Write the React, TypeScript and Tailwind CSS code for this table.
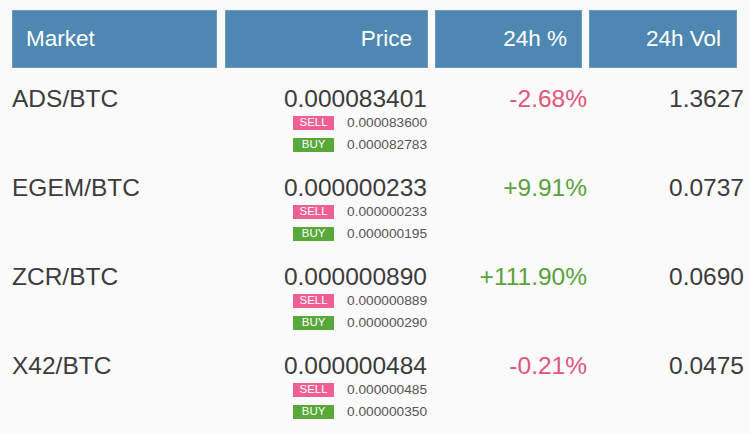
const ROWS = [
  { market: "ADS/BTC", price: "0.000083401", sell: "0.000083600", buy: "0.000082783", pct: "-2.68%", vol: "1.3627" },
  { market: "EGEM/BTC", price: "0.000000233", sell: "0.000000233", buy: "0.000000195", pct: "+9.91%", vol: "0.0737" },
  { market: "ZCR/BTC", price: "0.000000890", sell: "0.000000889", buy: "0.000000290", pct: "+111.90%", vol: "0.0690" },
  { market: "X42/BTC", price: "0.000000484", sell: "0.000000485", buy: "0.000000350", pct: "-0.21%", vol: "0.0475" },
];

function Badge({ kind }: { kind: "SELL" | "BUY" }) {
  const bg = kind === "SELL" ? "bg-[#ee5f93]" : "bg-[#58a83a]";
  return (
    <span className={`inline-flex items-center justify-center w-[41px] h-[14px] text-[11.5px] leading-none text-white ${bg}`}>
      {kind}
    </span>
  );
}

function SubPrice({ kind, value }: { kind: "SELL" | "BUY"; value: string }) {
  return (
    <div className="flex items-center justify-end h-[22px] gap-[13px] pr-[1px]">
      <Badge kind={kind} />
      <span className="text-[13.7px] text-[#555]">{value}</span>
    </div>
  );
}

export default function App() {
  return (
    <div
      className="w-[750px] h-[434px] bg-[#fafafa] overflow-hidden text-[#3c3c3c]"
      style={{ fontFamily: '"Liberation Sans", Arial, sans-serif' }}
    >
      {/* Header */}
      <div className="flex pt-[10px] text-[22.5px] text-white">
        <div className="ml-[12px] w-[205px] h-[58px] flex items-center pl-[13px] bg-[#4e88b2] border border-[#6b9cc0]">
          Market
        </div>
        <div className="ml-[8px] w-[203px] h-[58px] flex items-center justify-end pr-[15px] bg-[#4e88b2] border border-[#6b9cc0]">
          Price
        </div>
        <div className="ml-[7px] w-[147px] h-[58px] flex items-center justify-end pr-[14px] bg-[#4e88b2] border border-[#6b9cc0]">
          24h %
        </div>
        <div className="ml-[7px] w-[148px] h-[58px] flex items-center justify-end pr-[15px] bg-[#4e88b2] border border-[#6b9cc0]">
          24h Vol
        </div>
      </div>

      {/* Rows */}
      <div className="mt-[18px]">
        {ROWS.map((r) => (
          <div key={r.market} className="flex h-[89px] ml-[12px] text-[24.5px] leading-[26px]">
            <div className="w-[213px]">{r.market}</div>
            <div className="w-[203px] flex flex-col">
              <div className="text-right pr-[1px]">{r.price}</div>
              <SubPrice kind="SELL" value={r.sell} />
              <SubPrice kind="BUY" value={r.buy} />
            </div>
            <div className={`w-[159px] text-right ${r.pct.startsWith("-") ? "text-[#e0557c]" : "text-[#5aa23c]"}`}>
              {r.pct}
            </div>
            <div className="w-[157px] text-right">{r.vol}</div>
          </div>
        ))}
      </div>
    </div>
  );
}
